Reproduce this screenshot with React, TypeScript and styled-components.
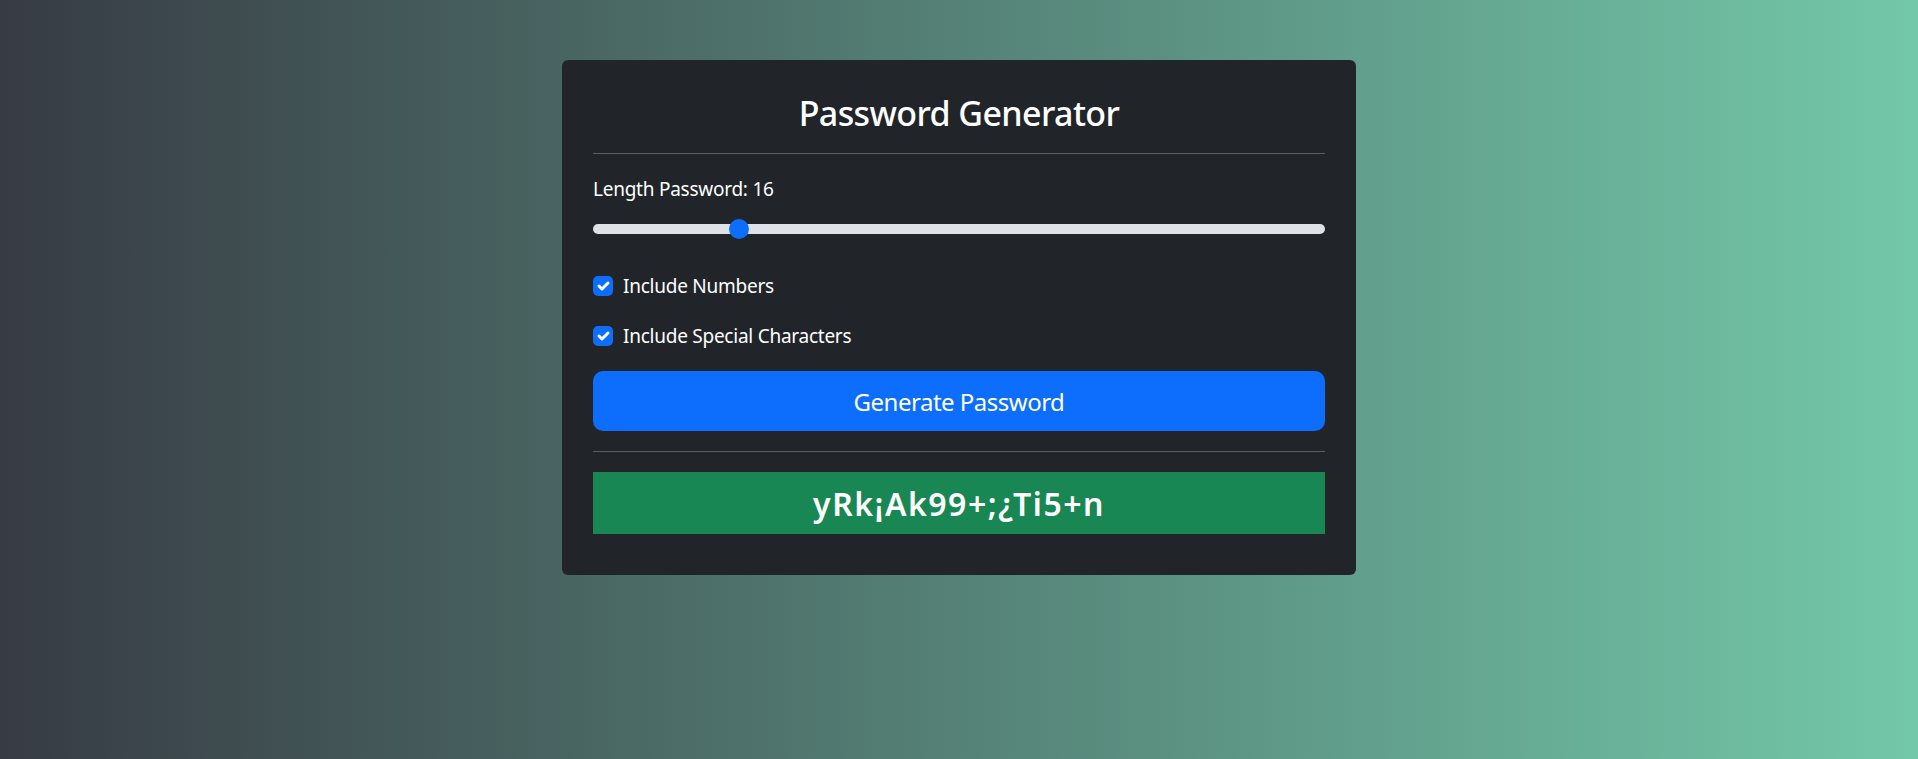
import React, { useState } from "react";
import styled, { createGlobalStyle } from "styled-components";

const GlobalStyle = createGlobalStyle`
  * { box-sizing: border-box; }
  html, body { margin: 0; padding: 0; }
  body {
    min-height: 100vh;
    font-family: "Noto Sans", "Open Sans", sans-serif;
    color: #fff;
    background: linear-gradient(to right, #373b44, #73c8a9);
  }
`;

const Page = styled.main`
  min-height: 100vh;
  padding-top: 60px;
`;

const Card = styled.section`
  width: 794px;
  margin: 0 auto;
  background: #212529;
  border-radius: 6px;
  padding: 30px 31px 41px;
  display: flex;
  flex-direction: column;
`;

const Title = styled.h3`
  margin: 0;
  font-size: 34px;
  line-height: 46px;
  font-weight: 500;
  letter-spacing: -0.6px;
  text-align: center;
  color: #fff;
`;

const Divider = styled.hr<{ $top: number }>`
  margin: ${(p) => p.$top}px 0 0;
  border: 0;
  height: 1px;
  background: #5a5d61;
`;

const FieldLabel = styled.label`
  margin-top: 20px;
  font-size: 19px;
  letter-spacing: -0.25px;
  line-height: 30px;
  color: #fff;
`;

const Range = styled.input`
  -webkit-appearance: none;
  appearance: none;
  display: block;
  width: 100%;
  height: 30px;
  margin: 10px 0 0;
  padding: 0;
  background: transparent;

  &::-webkit-slider-runnable-track {
    height: 10px;
    border-radius: 10px;
    background: #dee2e6;
  }
  &::-webkit-slider-thumb {
    -webkit-appearance: none;
    appearance: none;
    width: 20px;
    height: 20px;
    margin-top: -5px;
    border: 0;
    border-radius: 50%;
    background: #0d6efd;
  }
`;

const CheckRow = styled.label<{ $top: number }>`
  display: flex;
  align-items: center;
  gap: 10px;
  margin-top: ${(p) => p.$top}px;
  height: 30px;
  font-size: 19px;
  letter-spacing: -0.25px;
  color: #fff;
`;

const CheckBox = styled.span`
  width: 20px;
  height: 20px;
  border-radius: 5px;
  background: #0d6efd;
  display: flex;
  align-items: center;
  justify-content: center;
  flex: none;
`;

const GenerateButton = styled.button`
  margin-top: 20px;
  height: 60px;
  width: 100%;
  border: 0;
  border-radius: 10px;
  background: #0d6efd;
  color: #fff;
  font-family: inherit;
  font-size: 24px;
  letter-spacing: -0.5px;
  font-weight: 400;
  cursor: pointer;
`;

const Result = styled.div`
  margin-top: 20px;
  height: 62px;
  background: #198754;
  display: flex;
  align-items: center;
  justify-content: center;
  font-size: 32px;
  letter-spacing: 1.5px;
  font-weight: 600;
  color: #fff;
`;

const Check = () => (
  <CheckBox>
    <svg width="20" height="20" viewBox="0 0 20 20" fill="none">
      <path d="M6 10l3 3l6-6" stroke="#fff" strokeWidth="3" strokeLinecap="round" strokeLinejoin="round" />
    </svg>
  </CheckBox>
);

export default function App() {
  const [length, setLength] = useState(16);
  return (
    <>
      <GlobalStyle />
      <Page>
        <Card>
          <Title>Password Generator</Title>
          <Divider $top={17} />
          <FieldLabel htmlFor="len">Length Password: {length}</FieldLabel>
          <Range
            id="len"
            type="range"
            min={8}
            max={50}
            value={length}
            onChange={(e) => setLength(Number(e.target.value))}
          />
          <CheckRow $top={27}>
            <Check />
            Include Numbers
          </CheckRow>
          <CheckRow $top={20}>
            <Check />
            Include Special Characters
          </CheckRow>
          <GenerateButton>Generate Password</GenerateButton>
          <Divider $top={20} />
          <Result>yRk¡Ak99+;¿Ti5+n</Result>
        </Card>
      </Page>
    </>
  );
}
